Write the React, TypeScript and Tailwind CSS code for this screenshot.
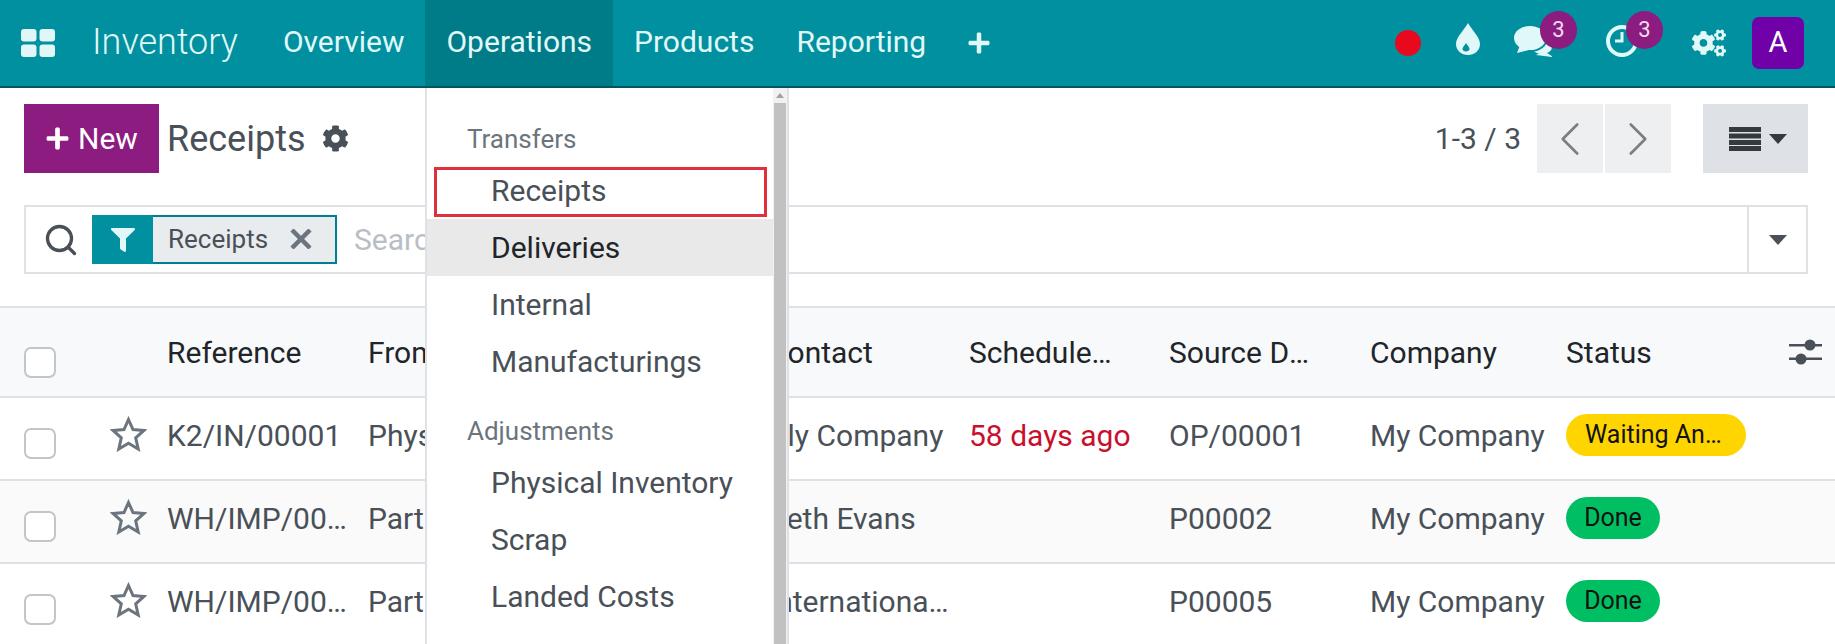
import { ChevronLeft, ChevronRight, Search } from 'lucide-react'
import { FaCog, FaCogs, FaFilter, FaPlus } from 'react-icons/fa'

const navItems = ['Overview', 'Operations', 'Products', 'Reporting']

const rows = [
  { ref: 'K2/IN/00001', from: 'Physical Locations', contact: 'Aly Company', late: '58 days ago', source: 'OP/00001', status: 'Waiting Another Operation', tone: 'bg-[#ffd500]', width: 'w-[180px] px-[19px]', alt: false },
  { ref: 'WH/IMP/00002', from: 'Partner Locations', contact: 'Beth Evans', late: '', source: 'P00002', status: 'Done', tone: 'bg-[#00bf63]', width: 'w-[94px] px-[19px]', alt: true },
  { ref: 'WH/IMP/00003', from: 'Partner Locations', contact: 'International Ltd', late: '', source: 'P00005', status: 'Done', tone: 'bg-[#00bf63]', width: 'w-[94px] px-[19px]', alt: false },
]

function Checkbox() {
  return <div className="w-[32px] h-[31px] rounded-[7px] border-2 border-[#c2c5c9] bg-white" />
}

function Badge({ value }: { value: number }) {
  return (
    <span className="absolute -top-[10px] -right-[25px] w-[37px] h-[38px] rounded-full bg-[#8c1c80] text-[#f3dcf0] text-[22px] flex items-center justify-center pb-[2px]">
      {value}
    </span>
  )
}

function CaretDown() {
  return <div className="w-0 h-0 border-x-[9px] border-x-transparent border-t-[10px] border-t-current" />
}

function Star() {
  return (
    <svg width="37" height="36" viewBox="0 0 37 36" fill="none" stroke="#6c757d" strokeWidth="3" className="shrink-0">
      <polygon points="18.5,3.5 23,13.5 34,14.5 25.7,21.8 28.2,33 18.5,27.2 8.8,33 11.3,21.8 3,14.5 14,13.5" />
    </svg>
  )
}

function Navbar() {
  return (
    <div className="h-[88px] shrink-0 flex items-center bg-[#00909f] border-b-2 border-[#00565f] text-[#e0f8f8]">
      <div className="w-[92px] pl-[21px]">
        <svg width="34" height="28" viewBox="0 0 34 28" fill="#e0f6f7">
          <rect x="0" y="0" width="15.5" height="12.5" rx="3" />
          <rect x="18.5" y="0" width="15.5" height="12.5" rx="3" />
          <rect x="0" y="15.5" width="15.5" height="12.5" rx="3" />
          <rect x="18.5" y="15.5" width="15.5" height="12.5" rx="3" />
        </svg>
      </div>
      <div className="text-[36px] font-light pr-[24px] pb-[2px]">Inventory</div>
      {navItems.map((item) => (
        <div
          key={item}
          className={`h-full flex items-center px-[21px] pb-[3px] text-[30px] ${item === 'Operations' ? 'bg-[#007c89]' : ''}`}
        >
          {item}
        </div>
      ))}
      <div className="pl-[20px]">
        <FaPlus className="w-[24px] h-[24px]" />
      </div>
      <div className="ml-auto flex items-center pr-[31px]">
        <div className="w-[26px] h-[26px] rounded-full bg-[#e8091e]" />
        <svg className="ml-[35px] -mt-[8px]" width="24" height="32" viewBox="0 0 24 32" fill="#e0f8f8">
          <path d="M12 0C15 6 24 14 24 21C24 27.5 18.5 32 12 32C5.5 32 0 27.5 0 21C0 14 9 6 12 0Z" />
          <path d="M10 20C11 22 13.5 24 13.5 26C13.5 27.5 12 28.5 10 28.5C8 28.5 6.5 27.5 6.5 26C6.5 24 9 22 10 20Z" fill="#00909f" />
        </svg>
        <div className="relative ml-[34px] -mt-[6px] h-[38px]">
          <svg width="38" height="38" viewBox="0 0 38 38" fill="#e0f8f8">
            <ellipse cx="28" cy="26" rx="10" ry="7" />
            <polygon points="30,30 39,36 22,34" />
            <ellipse cx="16" cy="17" rx="17" ry="13" stroke="#00909f" strokeWidth="2" />
            <polygon points="6,24 3,32 15,29" />
          </svg>
          <Badge value={3} />
        </div>
        <div className="relative ml-[54px] -mt-[6px] h-[38px]">
          <svg width="32" height="38" viewBox="0 0 32 38" fill="none" stroke="#e0f8f8">
            <circle cx="16" cy="20" r="14" strokeWidth="4" />
            <path d="M16 11V20H9" strokeWidth="3" />
          </svg>
          <Badge value={3} />
        </div>
        <FaCogs className="ml-[54px] w-[34px] h-[32px]" />
        <div className="ml-[26px] w-[52px] h-[52px] rounded-[7px] bg-[#7000a8] text-white text-[29px] flex items-center justify-center">
          A
        </div>
      </div>
    </div>
  )
}

function ControlPanel() {
  return (
    <div className="pl-[24px] pr-[27px] pt-[16px] h-[218px] shrink-0">
      <div className="flex items-center h-[69px]">
        <button className="w-[135px] h-[69px] bg-[#8c1c80] text-white text-[30px] flex items-center pl-[21px] gap-[8px]">
          <FaPlus className="w-[25px] h-[25px]" />
          New
        </button>
        <div className="ml-[8px] text-[#495057] text-[36px]">Receipts</div>
        <FaCog className="ml-[16px] w-[27px] h-[27px] text-[#495057]" />
        <div className="ml-auto text-[#495057] text-[30px]">1-3 / 3</div>
        <div className="ml-[16px] flex gap-[2px]">
          <div className="w-[66px] h-[69px] bg-[#eeeff1] flex items-center justify-center text-[#7b7f84]">
            <ChevronLeft className="w-[58px] h-[58px]" strokeWidth={1.1} />
          </div>
          <div className="w-[66px] h-[69px] bg-[#eeeff1] flex items-center justify-center text-[#7b7f84]">
            <ChevronRight className="w-[58px] h-[58px]" strokeWidth={1.1} />
          </div>
        </div>
        <div className="ml-[32px] w-[105px] h-[69px] bg-[#dee2e6] flex items-center pl-[26px] gap-[8px] text-[#343a40]">
          <svg width="32" height="24" viewBox="0 0 32 24" fill="#343a40">
            <rect y="0" width="32" height="5" />
            <rect y="6.5" width="32" height="5" />
            <rect y="13" width="32" height="5" />
            <rect y="19" width="32" height="5" />
          </svg>
          <CaretDown />
        </div>
      </div>
      <div className="mt-[32px] h-[69px] border-2 border-[#dee2e6] flex items-center">
        <Search className="ml-[17px] w-[36px] h-[36px] text-[#495057]" strokeWidth={2.2} />
        <div className="ml-[13px] h-[49px] w-[245px] flex border-2 border-[#00808e] bg-[#e9ecef]">
          <div className="w-[61px] bg-[#00909f] -ml-[2px] -my-[2px] flex items-center justify-center text-[#e0f8f8]">
            <FaFilter className="w-[24px] h-[24px]" />
          </div>
          <div className="pl-[15px] flex items-center text-[#495057] text-[26px]">Receipts</div>
          <svg className="ml-[22px] mt-[12px]" width="22" height="20" viewBox="0 0 22 20" stroke="#6c757d" strokeWidth="4.5">
            <path d="M2 1L20 19M20 1L2 19" />
          </svg>
        </div>
        <div className="ml-[17px] text-[30px] text-[#b9bec4]">Search...</div>
        <div className="ml-auto w-[59px] h-full border-l-2 border-[#dee2e6] flex items-center justify-center text-[#495057]">
          <CaretDown />
        </div>
      </div>
    </div>
  )
}

function Table() {
  return (
    <div className="text-[30px] text-[#495057]">
      <div className="h-[92px] flex items-center bg-[#f8f9fa] border-y-2 border-[#dee2e6] text-[#212529]">
        <div className="w-[167px] pl-[24px] pt-[21px]">
          <Checkbox />
        </div>
        <div className="w-[201px] truncate pr-[20px]">Reference</div>
        <div className="w-[400px] truncate pr-[20px]">From</div>
        <div className="w-[201px] truncate pr-[14px]">Contact</div>
        <div className="w-[200px] truncate pr-[46px]">Scheduled Date</div>
        <div className="w-[201px] truncate pr-[58px]">Source Document</div>
        <div className="w-[196px] truncate pr-[20px]">Company</div>
        <div>Status</div>
        <svg className="ml-auto mr-[13px]" width="33" height="26" viewBox="0 0 33 26" fill="#495057">
          <rect y="5" width="33" height="2.5" />
          <circle cx="21" cy="6" r="5.5" />
          <rect y="18.5" width="33" height="2.5" />
          <circle cx="12" cy="20" r="5.5" />
        </svg>
      </div>
      {rows.map((row) => (
        <div
          key={row.ref}
          className={`h-[83px] flex items-center border-b-2 border-[#dee2e6] ${row.alt ? 'bg-[#fafafa]' : 'bg-white'}`}
        >
          <div className="w-[110px] pl-[24px] pt-[9px] shrink-0">
            <Checkbox />
          </div>
          <div className="w-[57px] shrink-0 -mt-[9px]">
            <Star />
          </div>
          <div className="w-[201px] shrink-0 truncate pr-[20px] -mt-[6px]">{row.ref}</div>
          <div className="w-[400px] shrink-0 truncate pr-[20px] -mt-[6px]">{row.from}</div>
          <div className="w-[201px] shrink-0 truncate pr-[14px] -mt-[6px]">{row.contact}</div>
          <div className="w-[200px] shrink-0 truncate pr-[20px] -mt-[6px] text-[#c8102e]">{row.late}</div>
          <div className="w-[201px] shrink-0 truncate pr-[20px] -mt-[6px]">{row.source}</div>
          <div className="w-[196px] shrink-0 truncate pr-[20px] -mt-[6px]">My Company</div>
          <div className={`${row.width} h-[42px] -mt-[8px] rounded-full ${row.tone} text-[#111] text-[25px] leading-[42px] ${row.status === 'Done' ? 'text-center !px-0' : 'truncate'}`}>
            {row.status}
          </div>
        </div>
      ))}
    </div>
  )
}

function OperationsMenu() {
  return (
    <div className="absolute left-[425px] top-[88px] bottom-0 w-[364px] bg-white border-x-2 border-[#dee2e6] flex text-[#495057]">
      <div className="w-[346px] pt-[30px]">
        <div className="pl-[40px] h-[44px] text-[26px] text-[#6c757d] leading-[42px]">Transfers</div>
        <div className="relative h-[57px] pl-[64px] text-[30px] leading-[57px]">
          Receipts
          <span className="absolute left-[7px] right-[6px] top-[5px] h-[50px] border-[3px] border-[#e0303a]" />
        </div>
        <div className="h-[57px] pl-[64px] text-[30px] leading-[57px] bg-[#e9e9e9] text-[#212529]">Deliveries</div>
        <div className="h-[57px] pl-[64px] text-[30px] leading-[57px]">Internal</div>
        <div className="h-[57px] pl-[64px] text-[30px] leading-[57px]">Manufacturings</div>
        <div className="pl-[40px] mt-[19px] h-[45px] text-[26px] text-[#6c757d] leading-[45px]">Adjustments</div>
        <div className="h-[57px] pl-[64px] text-[30px] leading-[57px]">Physical Inventory</div>
        <div className="h-[57px] pl-[64px] text-[30px] leading-[57px]">Scrap</div>
        <div className="h-[57px] pl-[64px] text-[30px] leading-[57px]">Landed Costs</div>
      </div>
      <div className="w-[14px] bg-[#f1f1f1] flex flex-col items-center">
        <div className="h-[15px] flex items-center">
          <div className="w-0 h-0 border-x-[4px] border-x-transparent border-b-[5px] border-b-[#a3a3a3]" />
        </div>
        <div className="w-[12px] flex-1 bg-[#c1c1c1]" />
      </div>
    </div>
  )
}

export default function App() {
  return (
    <div className="relative w-[1835px] h-[644px] overflow-hidden bg-white font-['Roboto',sans-serif] flex flex-col">
      <Navbar />
      <ControlPanel />
      <Table />
      <OperationsMenu />
    </div>
  )
}
